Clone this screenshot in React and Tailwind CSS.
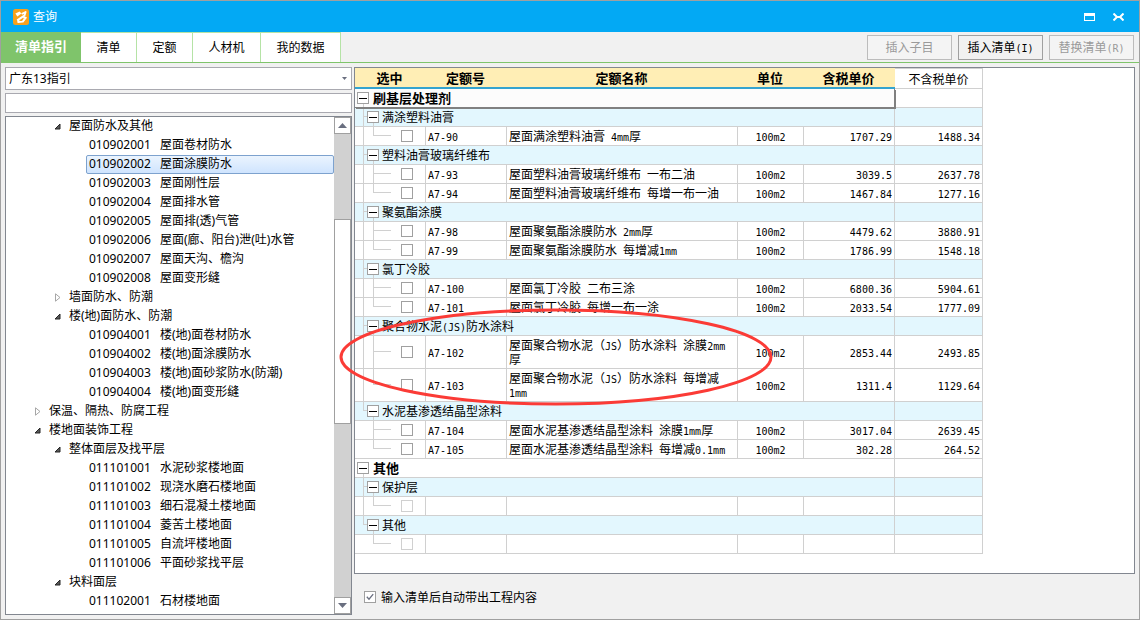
import React, { useState } from "react";

const tabs = [
  { name: "清单指引", width: "w-20" },
  { name: "清单", width: "w-14" },
  { name: "定额", width: "w-14" },
  { name: "人材机", width: "w-[68px]" },
  { name: "我的数据", width: "w-20" },
];

const treeRows = [
  { level: 2, open: true, label: "屋面防水及其他" },
  { code: "010902001", label: "屋面卷材防水" },
  { code: "010902002", label: "屋面涂膜防水" },
  { code: "010902003", label: "屋面刚性层" },
  { code: "010902004", label: "屋面排水管" },
  { code: "010902005", label: "屋面排(透)气管" },
  { code: "010902006", label: "屋面(廊、阳台)泄(吐)水管" },
  { code: "010902007", label: "屋面天沟、檐沟" },
  { code: "010902008", label: "屋面变形缝" },
  { level: 2, open: false, label: "墙面防水、防潮" },
  { level: 2, open: true, label: "楼(地)面防水、防潮" },
  { code: "010904001", label: "楼(地)面卷材防水" },
  { code: "010904002", label: "楼(地)面涂膜防水" },
  { code: "010904003", label: "楼(地)面砂浆防水(防潮)" },
  { code: "010904004", label: "楼(地)面变形缝" },
  { level: 1, open: false, label: "保温、隔热、防腐工程" },
  { level: 1, open: true, label: "楼地面装饰工程" },
  { level: 2, open: true, label: "整体面层及找平层" },
  { code: "011101001", label: "水泥砂浆楼地面" },
  { code: "011101002", label: "现浇水磨石楼地面" },
  { code: "011101003", label: "细石混凝土楼地面" },
  { code: "011101004", label: "菱苦土楼地面" },
  { code: "011101005", label: "自流坪楼地面" },
  { code: "011101006", label: "平面砂浆找平层" },
  { level: 2, open: true, label: "块料面层" },
  { code: "011102001", label: "石材楼地面" },
];

const quotas = [
  {
    name: "刷基层处理剂",
    current: true,
    groups: [
      {
        name: "满涂塑料油膏",
        items: [["A7-90", "屋面满涂塑料油膏 4mm厚", "1707.29", "1488.34"]],
      },
      {
        name: "塑料油膏玻璃纤维布",
        items: [
          ["A7-93", "屋面塑料油膏玻璃纤维布 一布二油", "3039.5", "2637.78"],
          ["A7-94", "屋面塑料油膏玻璃纤维布 每增一布一油", "1467.84", "1277.16"],
        ],
      },
      {
        name: "聚氨酯涂膜",
        items: [
          ["A7-98", "屋面聚氨酯涂膜防水 2mm厚", "4479.62", "3880.91"],
          ["A7-99", "屋面聚氨酯涂膜防水 每增减1mm", "1786.99", "1548.18"],
        ],
      },
      {
        name: "氯丁冷胶",
        items: [
          ["A7-100", "屋面氯丁冷胶 二布三涂", "6800.36", "5904.61"],
          ["A7-101", "屋面氯丁冷胶 每增一布一涂", "2033.54", "1777.09"],
        ],
      },
      {
        name: "聚合物水泥(JS)防水涂料",
        tall: true,
        items: [
          ["A7-102", "屋面聚合物水泥（JS）防水涂料 涂膜2mm厚", "2853.44", "2493.85"],
          ["A7-103", "屋面聚合物水泥（JS）防水涂料 每增减1mm", "1311.4", "1129.64"],
        ],
      },
      {
        name: "水泥基渗透结晶型涂料",
        items: [
          ["A7-104", "屋面水泥基渗透结晶型涂料 涂膜1mm厚", "3017.04", "2639.45"],
          ["A7-105", "屋面水泥基渗透结晶型涂料 每增减0.1mm", "302.28", "264.52"],
        ],
      },
    ],
  },
  {
    name: "其他",
    groups: [
      { name: "保护层", items: [["", "", "", ""]] },
      { name: "其他", items: [["", "", "", ""]] },
    ],
  },
];

const cell = "border-r border-b border-[#d0d0d0] p-0";

// Latin runs are set in a smaller mono face, two of them to one Chinese character
const Mixed = ({ text }) =>
  text.split(/([\x20-\x7e]+)/).map((part, i) =>
    i % 2 ? (
      <span key={i} className="font-['DejaVu_Sans_Mono',monospace] text-[10px] leading-none">
        {part}
      </span>
    ) : (
      part
    )
  );

const Logo = () => (
  <svg viewBox="0 0 16 16" className="size-4" aria-hidden="true">
    <rect width="16" height="16" rx="2.5" fill="#f9a11b" />
    <path d="M2.4 4.6 L6.6 2.4 L8.4 4.6 L4.4 7.6 Z" fill="#fff" />
    <g fill="none" stroke="#fff" strokeWidth="1.9" strokeLinejoin="round">
      <path d="M8.6 5 L12.6 3 L11.4 6.6 L4.2 11.4" />
      <path d="M10.2 8.4 L12.8 8.6 L9.8 12.6 L5.2 13 L5.6 11" />
    </g>
  </svg>
);

const Arrow = ({ open }) => (
  <svg viewBox="0 0 8 9" className="h-[9px] w-2" aria-hidden="true">
    {open ? (
      <path d="M6 2 V7 H1 Z" fill="#595959" stroke="#262626" />
    ) : (
      <path d="M1.5 0.8 L6 4.5 L1.5 8.2 Z" fill="#fff" stroke="#a6a6a6" />
    )}
  </svg>
);

const ScrollButton = ({ up }) => (
  <button
    aria-label={up ? "向上滚动" : "向下滚动"}
    className="flex h-[17px] w-[17px] shrink-0 items-center justify-center border border-[#a0a0a0] bg-white"
  >
    <svg viewBox="0 0 9 5" className="h-[5px] w-[9px]">
      <path d={up ? "M0 5 L4.5 0 L9 5 Z" : "M0 0 L9 0 L4.5 5 Z"} fill="#6a6f80" />
    </svg>
  </button>
);

const Elbow = ({ width, last, tall }) => (
  <div className={`flex flex-col ${width}`}>
    <div className={`shrink-0 border-b border-l border-[#d0d0d0] ${tall ? "h-4" : "h-[9px]"}`} />
    {!last && <div className="flex-1 border-l border-[#d0d0d0]" />}
  </div>
);

const Toggle = () => (
  <div className="flex w-3 flex-col">
    <button
      aria-label="折叠"
      className="mt-[3px] flex size-3 shrink-0 items-center justify-center border border-[#a0a0a0] bg-white"
    >
      <span className="h-px w-2 bg-black" />
    </button>
    <div className="ml-1.5 flex-1 border-l border-[#d0d0d0]" />
  </div>
);

const ItemRow = ({ item, tall, last, lastGroup }) => {
  const [code, name, price, netPrice] = item;
  return (
    <tr>
      <td className={cell}>
        <div className={`flex pl-2 ${tall ? "h-8" : "h-[18px]"}`}>
          <div className={`w-2.5 ${lastGroup ? "" : "border-l border-[#d0d0d0]"}`} />
          <Elbow width="w-[18px]" last={last} tall={tall} />
          <input
            type="checkbox"
            aria-label={code || "空"}
            disabled={!code}
            className="ml-2.5 size-3 appearance-none self-center border border-[#a0a0a0] bg-white checked:bg-[#a0a0a0] disabled:border-[#d0d0d0]"
          />
        </div>
      </td>
      <td className={`${cell} pl-0.5`}>
        <Mixed text={code} />
      </td>
      <td className={`${cell} px-0.5 leading-[14px]`}>
        <Mixed text={name} />
      </td>
      <td className={`${cell} text-center`}>
        <Mixed text={code && "100m2"} />
      </td>
      <td className={`${cell} pr-0.5 text-right`}>
        <Mixed text={price} />
      </td>
      <td className={`${cell} pr-0.5 text-right`}>
        <Mixed text={netPrice} />
      </td>
    </tr>
  );
};

const QuotaTable = () => (
  <table className="w-[628px] table-fixed border-separate border-spacing-0 text-xs leading-4">
    <colgroup>
      <col className="w-[71px]" />
      <col className="w-[81px]" />
      <col className="w-[231px]" />
      <col className="w-[66px]" />
      <col className="w-[91px]" />
      <col className="w-[88px]" />
    </colgroup>
    <thead>
      <tr className="h-[21px] text-[13px]">
        {["选中", "定额号", "定额名称", "单位", "含税单价"].map((title) => (
          <th key={title} className="border-b-2 border-[#34a3cf] bg-[#ffeeb5] py-0 pr-0.5 pl-0 font-bold">
            {title}
          </th>
        ))}
        <th className="border border-l-0 border-[#d0d0d0] p-0 text-xs font-normal">不含税单价</th>
      </tr>
    </thead>
    {quotas.map((root) => (
      <tbody key={root.name}>
        <tr>
          <td
            colSpan="5"
            className={
              root.current
                ? "relative border-r border-b border-[#808080] bg-[#fcfcfc] p-0 shadow-[1px_1px_0_#808080]"
                : cell
            }
          >
            <div className="flex h-[18px] items-stretch gap-1 pl-0.5 text-[13px] font-bold">
              <Toggle />
              <span className="self-center">{root.name}</span>
            </div>
          </td>
          <td className={cell} />
        </tr>
        {root.groups.map((group, g) => {
          const lastGroup = g === root.groups.length - 1;
          return (
            <React.Fragment key={group.name}>
              <tr className="bg-[#e3f7fe]">
                <td colSpan="5" className={cell}>
                  <div className="flex h-[18px] pl-2">
                    <Elbow width="w-1" last={lastGroup} />
                    <Toggle />
                    <span className="ml-[3px] self-center">
                      <Mixed text={group.name} />
                    </span>
                  </div>
                </td>
                <td className={cell} />
              </tr>
              {group.items.map((item, i) => (
                <ItemRow
                  key={i}
                  item={item}
                  tall={group.tall}
                  last={i === group.items.length - 1}
                  lastGroup={lastGroup}
                />
              ))}
            </React.Fragment>
          );
        })}
      </tbody>
    ))}
  </table>
);

const App = () => {
  const [selected, setSelected] = useState("010902002");
  const [autoFill, setAutoFill] = useState(true);

  return (
    <div className="relative flex min-h-screen flex-col border border-[#a0a0a0] bg-[#f1f1f1] font-['Noto_Sans','Noto_Sans_CJK_SC',sans-serif] text-xs text-black">
      {/* Title bar */}
      <header className="flex h-[31px] items-center bg-[#03a9f4] pr-[15px] pl-3 text-white">
        <Logo />
        <h1 className="ml-1 flex-1">查询</h1>
        <button aria-label="最大化" className="mr-[18px]">
          <svg viewBox="0 0 11 8" className="h-2 w-[11px]">
            <path d="M0 0 H11 V8 H0 Z M1 3 V7 H10 V3 Z" fill="#fff" fillRule="evenodd" />
          </svg>
        </button>
        <button aria-label="关闭">
          <svg viewBox="0 0 11 8" className="h-2 w-[11px]">
            <path d="M0.5 0.5 L4 4 L0.5 7.5 M10.5 0.5 L7 4 L10.5 7.5 M4 4 H7" fill="none" stroke="#fff" strokeWidth="2" />
          </svg>
        </button>
      </header>

      {/* Tabs and actions */}
      <div className="flex h-[31px] justify-between border-b border-[#7fc46b]">
        <nav className="flex">
          {tabs.map((tab, i) => (
            <button
              key={tab.name}
              className={
                i === 0
                  ? `${tab.width} bg-[#7fc46b] text-[13px] font-bold text-white`
                  : `${tab.width} border-t border-r border-[#b5e3a6] bg-white`
              }
            >
              {tab.name}
            </button>
          ))}
        </nav>
        <div className="flex gap-1.5 pt-[3px] pr-[5px]">
          <button disabled className="h-[25px] w-[85px] border border-[#bcbcbc] bg-[#f4f4f4] text-[#9a9a9a]">
            插入子目
          </button>
          <button className="h-[25px] w-[85px] border border-[#a0a0a0] bg-[#f1f1f1]">
            <Mixed text="插入清单(I)" />
          </button>
          <button disabled className="h-[25px] w-[85px] border border-[#bcbcbc] bg-[#f4f4f4] text-[#9a9a9a]">
            <Mixed text="替换清单(R)" />
          </button>
        </div>
      </div>

      <main className="flex flex-1 gap-0.5 p-1">
        {/* Guide tree */}
        <aside className="flex w-[347px] shrink-0 flex-col">
          <div className="grid items-center">
            <select
              aria-label="指引"
              className="col-start-1 row-start-1 h-[23px] w-full appearance-none border border-[#a9a9b0] bg-white pl-[3px]"
            >
              <option>广东13指引</option>
            </select>
            <svg
              viewBox="0 0 5 3"
              className="pointer-events-none col-start-1 row-start-1 mr-[5px] h-[3px] w-[5px] justify-self-end"
            >
              <path d="M0 0 H5 L2.5 3 Z" fill="#6a6f80" />
            </svg>
          </div>
          <input
            aria-label="查询"
            className="mt-[3px] h-5 w-full border border-[#a9a9b0] bg-white px-1 outline-none"
          />
          <div className="mt-[3px] flex flex-1 border border-[#828790] bg-white">
            <ul className="flex-1">
              {treeRows.map((row) =>
                row.code ? (
                  <li key={row.code} className="pl-20">
                    <button
                      onClick={() => setSelected(row.code)}
                      className={`flex h-[19px] w-full items-center rounded-xs border pb-px pl-0.5 text-left leading-4 ${
                        selected === row.code
                          ? "border-[#7da2ce] bg-linear-to-b from-[#ebf4fe] to-[#cfe4fe]"
                          : "border-transparent"
                      }`}
                    >
                      <span className="w-[71px]">{row.code}</span>
                      {row.label}
                    </button>
                  </li>
                ) : (
                  <li key={row.label}>
                    <button
                      className={`flex h-[19px] items-center gap-[7px] pb-px leading-4 ${
                        row.level === 1 ? "pl-7" : "pl-12"
                      }`}
                    >
                      <Arrow open={row.open} />
                      {row.label}
                    </button>
                  </li>
                )
              )}
            </ul>
            <div className="flex w-[17px] flex-col bg-[#d1d1d1]">
              <ScrollButton up />
              <div className="h-[85px]" />
              <div className="h-[205px] border border-[#a0a0a0] bg-white" />
              <div className="flex-1" />
              <ScrollButton />
            </div>
          </div>
        </aside>

        {/* Quota table */}
        <section className="flex min-w-0 flex-1 flex-col font-['Noto_Sans_CJK_SC',sans-serif]">
          <div className="flex-1 border border-[#828790] bg-white">
            <QuotaTable />
          </div>
          <label className="flex h-[41px] items-center gap-[5px] pt-1 pl-2.5">
            <span className="grid place-items-center">
              <input
                type="checkbox"
                checked={autoFill}
                onChange={(e) => setAutoFill(e.target.checked)}
                className="col-start-1 row-start-1 size-3 appearance-none border border-[#a0a0a0] bg-white"
              />
              {autoFill && (
                <svg viewBox="0 0 8 8" className="pointer-events-none col-start-1 row-start-1 size-2">
                  <path d="M0.8 3.8 L3 6.2 L7.2 1.2" fill="none" stroke="#6a6f80" strokeWidth="1.3" />
                </svg>
              )}
            </span>
            输入清单后自动带出工程内容
          </label>
        </section>
      </main>

      {/* Red marker round the JS coating quotas */}
      <svg
        viewBox="0 0 436 100"
        className="pointer-events-none absolute top-[306px] left-[337px] h-[100px] w-[436px]"
        aria-hidden="true"
      >
        <ellipse cx="218" cy="50" rx="215" ry="47" fill="none" stroke="#fb3b36" strokeWidth="3" />
      </svg>
    </div>
  );
};

export default App;
